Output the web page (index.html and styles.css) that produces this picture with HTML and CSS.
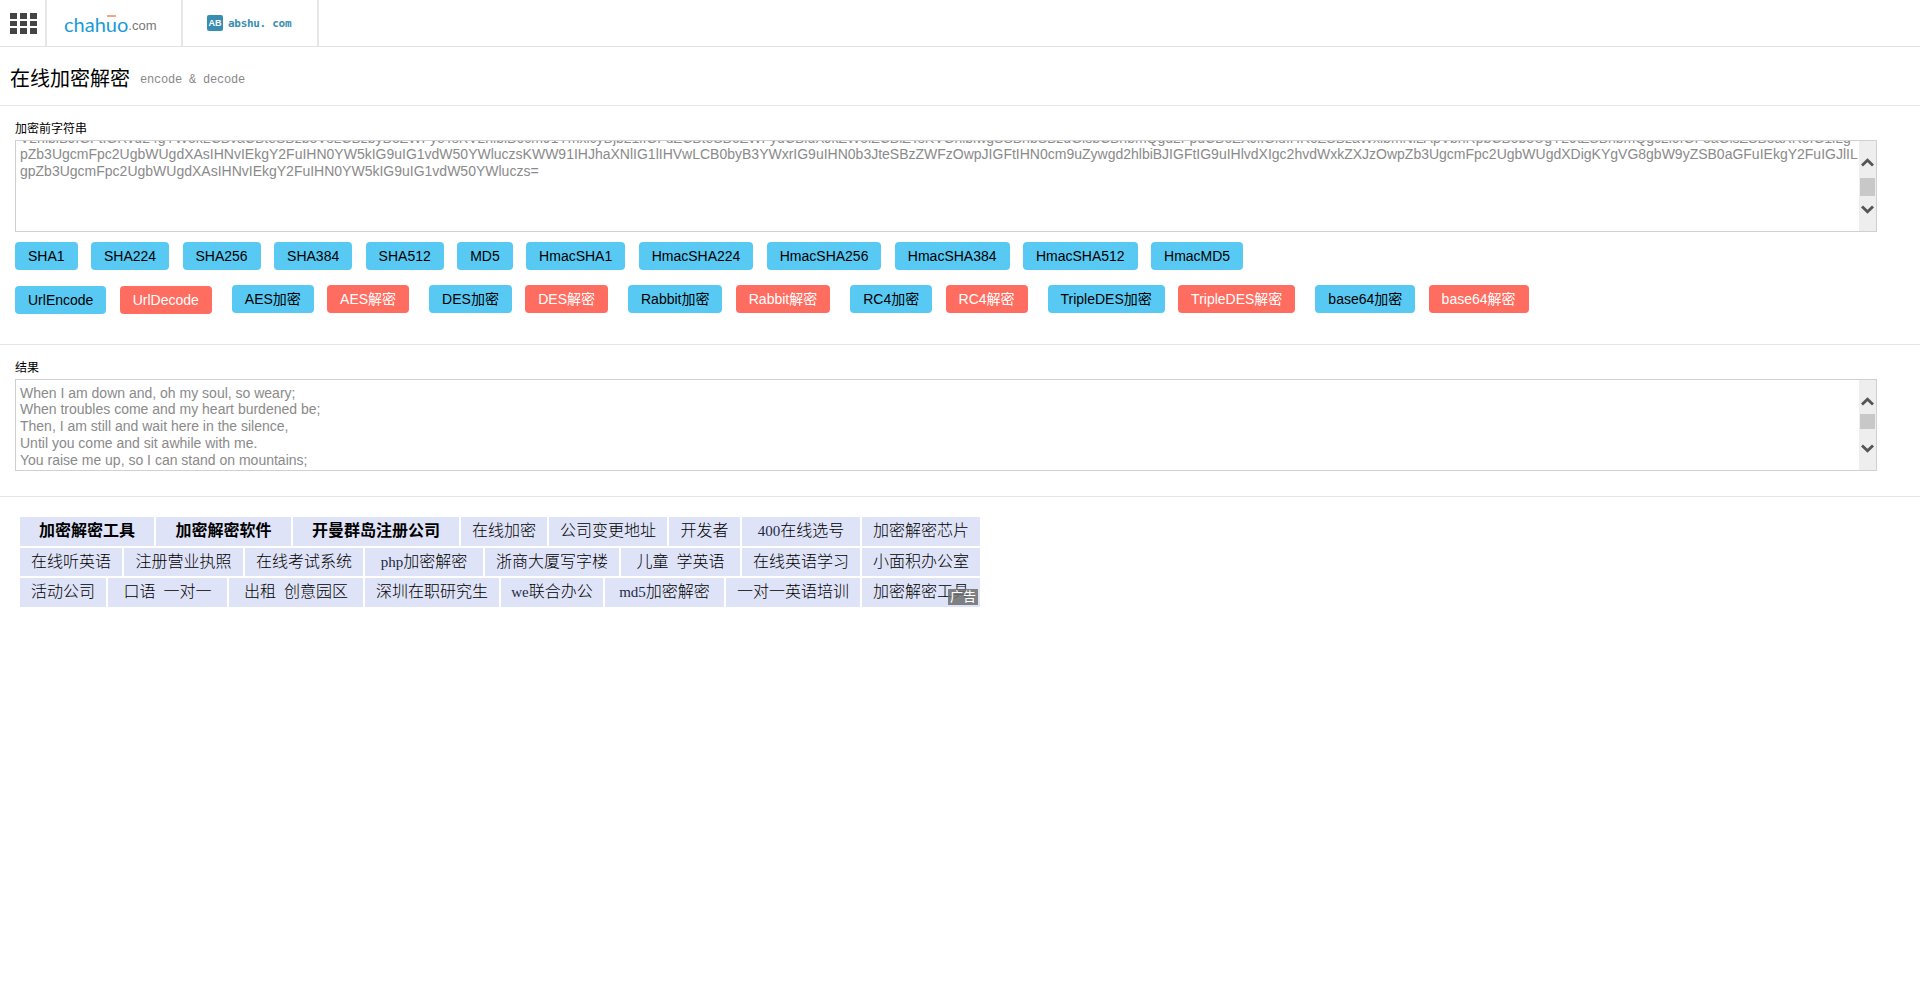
FILE: index.html
```html
<!DOCTYPE html>
<html lang="zh">
<head>
<meta charset="utf-8">
<title>在线加密解密</title>
<link rel="stylesheet" href="styles.css">
</head>
<body>
<header class="topbar">
  <a class="tab tab-grid">
    <svg class="grid-icon" width="27" height="21" viewBox="0 0 27 21"><g fill="#444"><rect x="0" y="0" width="7" height="6"/><rect x="10" y="0" width="7" height="6"/><rect x="20" y="0" width="7" height="6"/><rect x="0" y="8" width="7" height="5"/><rect x="10" y="8" width="7" height="5"/><rect x="20" y="8" width="7" height="5"/><rect x="0" y="15" width="7" height="6"/><rect x="10" y="15" width="7" height="6"/><rect x="20" y="15" width="7" height="6"/></g></svg>
  </a>
  <a class="tab tab-chahuo"><span class="logo-main">chah<span class="logo-u">u</span>o</span><span class="logo-com">.com</span></a>
  <a class="tab tab-abshu"><span class="ab-badge">AB</span><span class="ab-text">abshu. com</span></a>
</header>

<section class="title-row">
  <h1 class="title">在线加密解密</h1><small class="subtitle">encode &amp; decode</small>
</section>

<section class="panel panel-input">
  <label class="field-label">加密前字符串</label>
  <div class="textbox">
    <div class="textbox-text textbox-scrolled">
      <div class="line">V2hlbiBJIGFtIGRvd24gYW5kLCBvaCBteSBzb3VsLCBzbyB3ZWFyeTsKV2hlbiB0cm91YmxlcyBjb21lIGFuZCBteSBoZWFydCBidXJkZW5lZCBiZTsKVGhlbiwgSSBhbSBzdGlsbCBhbmQgd2FpdCBoZXJlIGluIHRoZSBzaWxlbmNlLApVbnRpbCB5b3UgY29tZSBhbmQgc2l0IGF3aGlsZSB3aXRoIG1lLg</div>
      <div class="line">pZb3UgcmFpc2UgbWUgdXAsIHNvIEkgY2FuIHN0YW5kIG9uIG1vdW50YWluczsKWW91IHJhaXNlIG1lIHVwLCB0byB3YWxrIG9uIHN0b3JteSBzZWFzOwpJIGFtIHN0cm9uZywgd2hlbiBJIGFtIG9uIHlvdXIgc2hvdWxkZXJzOwpZb3UgcmFpc2UgbWUgdXDigKYgVG8gbW9yZSB0aGFuIEkgY2FuIGJlIL</div>
      <div class="line">gpZb3UgcmFpc2UgbWUgdXAsIHNvIEkgY2FuIHN0YW5kIG9uIG1vdW50YWluczs=</div>
    </div>
    <div class="scrollbar">
      <svg class="chev" width="13" height="9" viewBox="0 0 13 9"><path d="M1 7.6 6.5 2.2 12 7.6" fill="none" stroke="#555" stroke-width="2.8"/></svg>
      <div class="thumb-track"><div class="thumb thumb-input"></div></div>
      <svg class="chev" width="13" height="9" viewBox="0 0 13 9"><path d="M1 1.4 6.5 6.8 12 1.4" fill="none" stroke="#555" stroke-width="2.8"/></svg>
    </div>
  </div>
  <div class="btn-row btn-row-hash">
    <button class="btn btn-info">SHA1</button>
    <button class="btn btn-info">SHA224</button>
    <button class="btn btn-info">SHA256</button>
    <button class="btn btn-info">SHA384</button>
    <button class="btn btn-info">SHA512</button>
    <button class="btn btn-info">MD5</button>
    <button class="btn btn-info">HmacSHA1</button>
    <button class="btn btn-info">HmacSHA224</button>
    <button class="btn btn-info">HmacSHA256</button>
    <button class="btn btn-info">HmacSHA384</button>
    <button class="btn btn-info">HmacSHA512</button>
    <button class="btn btn-info">HmacMD5</button>
  </div>
  <div class="btn-row btn-row-cipher">
    <button class="btn btn-info btn-low">UrlEncode</button>
    <button class="btn btn-danger btn-low btn-end">UrlDecode</button>
    <button class="btn btn-info">AES加密</button>
    <button class="btn btn-danger btn-end">AES解密</button>
    <button class="btn btn-info">DES加密</button>
    <button class="btn btn-danger btn-end">DES解密</button>
    <button class="btn btn-info">Rabbit加密</button>
    <button class="btn btn-danger btn-end">Rabbit解密</button>
    <button class="btn btn-info">RC4加密</button>
    <button class="btn btn-danger btn-end">RC4解密</button>
    <button class="btn btn-info">TripleDES加密</button>
    <button class="btn btn-danger btn-end">TripleDES解密</button>
    <button class="btn btn-info">base64加密</button>
    <button class="btn btn-danger btn-end">base64解密</button>
  </div>
</section>

<section class="panel panel-output">
  <label class="field-label">结果</label>
  <div class="textbox">
    <div class="textbox-text">
      <div class="line">When I am down and, oh my soul, so weary;</div>
      <div class="line">When troubles come and my heart burdened be;</div>
      <div class="line">Then, I am still and wait here in the silence,</div>
      <div class="line">Until you come and sit awhile with me.</div>
      <div class="line">You raise me up, so I can stand on mountains;</div>
    </div>
    <div class="scrollbar">
      <svg class="chev" width="13" height="9" viewBox="0 0 13 9"><path d="M1 7.6 6.5 2.2 12 7.6" fill="none" stroke="#555" stroke-width="2.8"/></svg>
      <div class="thumb-track"><div class="thumb thumb-output"></div></div>
      <svg class="chev" width="13" height="9" viewBox="0 0 13 9"><path d="M1 1.4 6.5 6.8 12 1.4" fill="none" stroke="#555" stroke-width="2.8"/></svg>
    </div>
  </div>
</section>

<aside class="ads">
  <div class="ad-row">
    <a class="ad ad-bold w134">加密解密工具</a><a class="ad ad-bold w135">加密解密软件</a><a class="ad ad-bold w166">开曼群岛注册公司</a><a class="ad w86">在线加密</a><a class="ad w118">公司变更地址</a><a class="ad w71">开发者</a><a class="ad w118"><span class="ad-latin">400</span>在线选号</a><a class="ad w118">加密解密芯片</a>
  </div>
  <div class="ad-row ad-row-mid">
    <a class="ad w102">在线听英语</a><a class="ad w119">注册营业执照</a><a class="ad w118">在线考试系统</a><a class="ad w118"><span class="ad-latin">php</span>加密解密</a><a class="ad w134">浙商大厦写字楼</a><a class="ad w119">儿童  学英语</a><a class="ad w118">在线英语学习</a><a class="ad w118">小面积办公室</a>
  </div>
  <div class="ad-row">
    <a class="ad w86">活动公司</a><a class="ad w119">口语  一对一</a><a class="ad w134">出租  创意园区</a><a class="ad w134">深圳在职研究生</a><a class="ad w102"><span class="ad-latin">we</span>联合办公</a><a class="ad w119"><span class="ad-latin">md5</span>加密解密</a><a class="ad w134">一对一英语培训</a><a class="ad w118">加密解密工具</a>
  </div>
  <span class="ad-badge">广告</span>
</aside>
</body>
</html>
```

FILE: styles.css
```css
* { box-sizing: border-box; }
html, body { margin: 0; padding: 0; background: #fff; }
body { font-family: "Liberation Sans", "Noto Sans CJK SC", sans-serif; font-size: 14px; color: #000; }

.topbar { display: flex; height: 47px; border-bottom: 1px solid #e2e2e2; }
.tab { display: flex; align-items: center; height: 46px; border-right: 2px solid #e6e6e6; }
.tab-grid { width: 47px; padding-left: 10px; }
.grid-icon { display: block; }
.tab-chahuo { width: 136px; padding-left: 17px; padding-top: 1px; }
.tab-abshu { width: 136px; padding-left: 24px; }
.logo-main { font-family: Lato, sans-serif; font-weight: 400; font-size: 20px; color: #1a9ad6; }
.logo-u { position: relative; }
.logo-u::before { content: ""; position: absolute; left: 1px; right: 1px; top: 3px; height: 2px; background: #f7a48c; }
.logo-com { font-family: "Liberation Sans", sans-serif; font-size: 13px; color: #777; margin-top: 4px; }
.ab-badge { display: flex; align-items: center; justify-content: center; width: 16px; height: 16px; border-radius: 2px; background: #388db0; color: #fff; font: bold 9px "Liberation Sans", sans-serif; }
.ab-text { font-family: "DejaVu Sans Mono", monospace; font-weight: bold; font-size: 11px; letter-spacing: -.3px; color: #3a8fb0; margin-left: 5px; }

.title-row { display: flex; align-items: center; height: 59px; padding: 3px 0 0 10px; border-bottom: 1px solid #e6e6e6; }
.title { margin: 0; font-family: "Noto Sans CJK SC", sans-serif; font-size: 20px; font-weight: 400; line-height: 28px; color: #000; }
.subtitle { font-family: "Liberation Mono", monospace; font-size: 12px; color: #888; margin: 5px 0 0 10px; letter-spacing: -.2px; }

.panel { padding: 15px 15px 0; border-bottom: 1px solid #e6e6e6; }
.panel-input { height: 239px; }
.panel-output { height: 152px; }
.field-label { display: block; height: 16px; margin-bottom: 3px; font-size: 12px; line-height: 16px; color: #000; }

.textbox { display: flex; width: 1862px; height: 92px; border: 1px solid #d0d0d0; overflow: hidden; }
.textbox-text { flex: 1; min-width: 0; padding: 4.5px 4px 0; font-size: 14px; line-height: 16.8px; color: #8a8a8a; overflow: hidden; }
.textbox-scrolled { padding-top: 0; }
.textbox-scrolled .line:first-child { margin-top: -11.5px; }
.line { white-space: nowrap; }

.scrollbar { display: flex; flex-direction: column; align-items: center; flex: none; width: 17px; background: #eee; padding-top: 17px; }
.chev { display: block; flex: none; }
.thumb-track { flex: none; width: 15px; height: 38px; }
.thumb { width: 15px; background: #c8c8c8; }
.thumb-input { height: 18px; margin-top: 11px; }
.thumb-output { height: 15px; margin-top: 8px; }

.btn-row { display: flex; align-items: flex-start; }
.btn-row-hash { gap: 13.4px; margin-top: 10px; }
.btn-row-cipher { gap: 13.3px; margin-top: 15px; }
.btn { flex: none; height: 28px; padding: 0 13px; border: 0; border-radius: 4px; font-family: "Liberation Sans", "Noto Sans CJK SC", sans-serif; font-size: 14px; line-height: 28px; }
.btn-info { background: #58c9f3; color: #000; }
.btn-danger { background: #ff6c60; color: #fff; }
.btn-low { margin-top: 1px; padding-bottom: 2px; }
.btn-end { margin-right: 6.7px; }

.ads { position: relative; display: flex; flex-direction: column; gap: 2px; width: 960px; margin: 20px 0 0 20px; }
.ad-row { display: flex; gap: 2px; height: 29px; }
.ad-row-mid { height: 28px; }
.ad { flex: none; background: #dfe3f7; font-family: "Liberation Serif", "Noto Sans CJK SC", serif; font-size: 16px; font-weight: 300; line-height: 27px; text-align: center; color: #000; white-space: pre; }
.ad-bold { font-weight: bold; }
.ad-latin { font-family: "Liberation Serif", serif; font-size: 15px; color: #1c2a4a; }
.w71 { width: 71px; }
.w86 { width: 86px; }
.w102 { width: 102px; }
.w118 { width: 118px; }
.w119 { width: 119px; }
.w134 { width: 134px; }
.w135 { width: 135px; }
.w166 { width: 166px; }
.ad-badge { position: absolute; right: 2px; bottom: 2px; width: 30px; height: 16px; background: rgba(110,110,110,.85); color: #fff; font-size: 13px; line-height: 16px; text-align: center; }
```
